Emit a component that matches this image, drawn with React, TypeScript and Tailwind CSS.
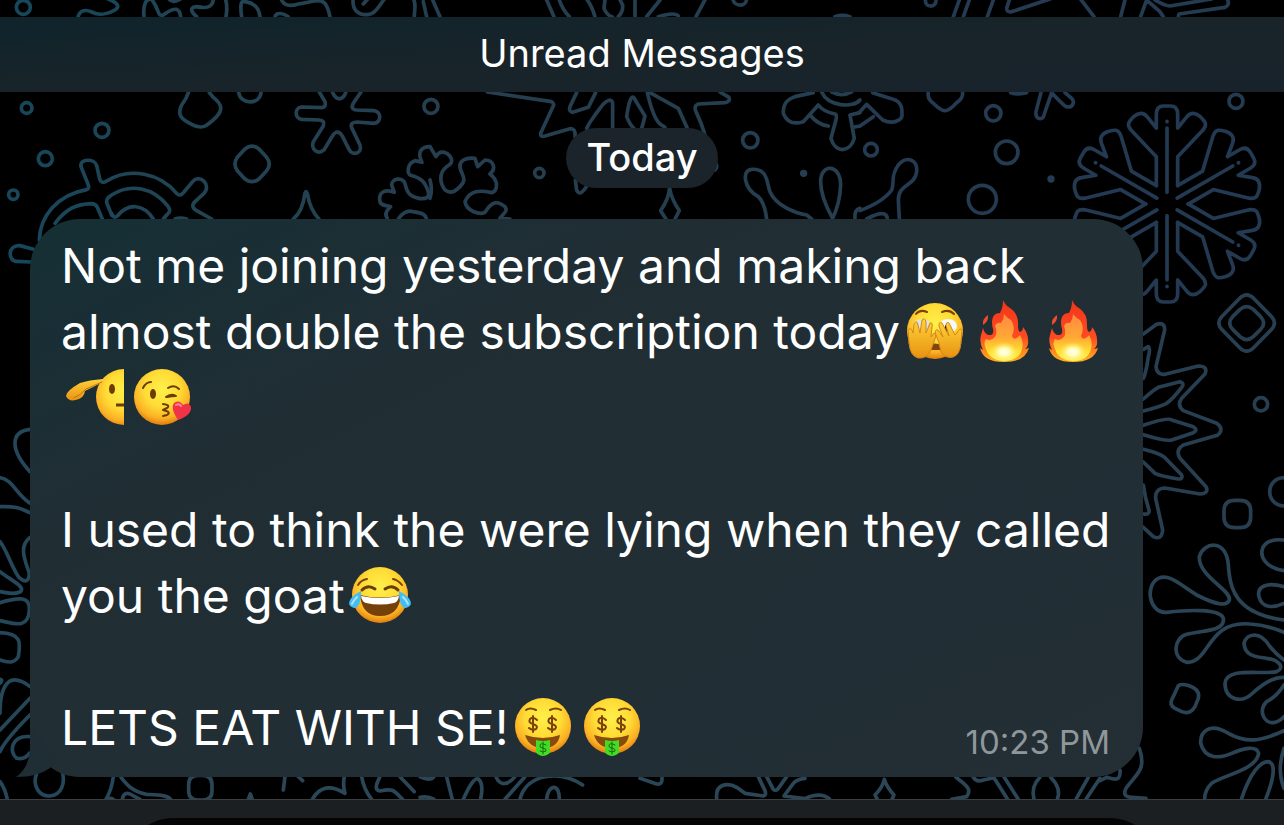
import type { ReactNode } from 'react'

const doodles = [
  {
    place: 'translate(0 0) scale(0.3333)',
    color: 'url(#teal)',
    paths: [
      'M234,50 C240,30 258,28 275,36 C300,48 320,44 345,30 C362,18 352,8 320,-5',
      'M432,50 C428,10 440,-5 455,-2 C480,30 470,50 490,45 C500,38 515,25 530,28 C540,32 542,50 542,50',
      'M505,-5 C515,8 525,5 540,-2',
      'M590,50 C572,35 568,22 590,20 C615,25 640,25 640,-5',
      'M676,-5 C684,20 680,35 678,50',
      'M725,50 C722,30 720,5 730,4 C770,8 778,30 780,50',
      'M825,50 C830,35 850,40 865,50',
      'M843,-5 C850,18 870,20 895,12 C940,5 960,-5 975,10 C985,25 988,40 990,50',
      'M1090,12 L1105,-5 M1060,-5 C1055,30 1075,45 1100,44 C1125,45 1135,20 1155,-5',
      'M1240,-5 C1250,15 1243,30 1243,50 M1270,5 L1280,50',
      'M566,276 Q560,295 545,315 C530,345 545,358 575,373 C605,390 620,380 650,350 C672,325 662,310 640,292 L628,278',
      'M716,278 C722,315 780,315 783,278',
      'M958,276 L975,305 Q980,322 965,323 L905,321 C883,323 883,355 905,358 L958,360 Q976,362 970,378 L940,425 C932,450 955,465 972,450 L995,412 Q1012,382 1028,410 L1047,448 C1058,470 1088,460 1080,435 L1055,383 Q1050,367 1070,366 L1122,370 C1145,368 1145,335 1122,332 L1070,330 Q1050,328 1060,310 L1083,276',
      'M997,276 L1003,287 Q1018,306 1033,287 L1038,276',
      'M735,447 Q756,430 777,447 L800,472 Q816,492 800,512 L777,537 Q756,553 735,537 L712,512 Q698,492 712,472Z',
      'M118,720 C120,650 170,585 260,569 Q270,567 263,550 L243,500 C238,475 285,475 290,497 L300,540 Q306,552 320,543 C390,500 480,520 530,580 Q540,592 552,576 L578,545 C600,520 635,555 612,580 L585,605 Q570,620 590,632 L635,657',
      'M165,670 C200,625 230,612 275,611 Q288,612 292,622 L307,657',
      'M335,645 L320,608 Q318,595 335,585 C390,550 460,560 505,620 Q515,635 500,645 L490,657',
      'M335,640 Q342,660 355,645 C385,610 430,610 460,657 M525,657 Q540,652 560,657',
      'M100,748 L60,737 C20,735 25,785 50,784 L92,786',
      'M880,657 Q908,635 915,580 Q918,570 922,580 Q930,630 957,657',
      'M1290,440 C1265,440 1250,455 1266,487 L1245,482 C1222,490 1220,520 1232,526 C1265,535 1275,545 1285,575 Q1292,598 1260,596 C1235,590 1222,585 1215,550 C1208,530 1175,535 1175,555 L1183,577 C1150,565 1135,580 1140,605 C1142,615 1155,617 1172,620 Q1150,640 1162,655',
      'M1195,657 Q1215,628 1240,635 C1265,640 1275,640 1280,657',
    ],
    rings: [[70, 22, 21], [80, 324, 16], [306, 391, 21], [136, 476, 21], [40, 584, 14], [1293, 319, 21]],
    dots: [],
  },
  {
    place: 'translate(430 0) scale(0.3333)',
    color: '#263f50',
    paths: [
      'M8,0 L30,50 M350,0 L372,50 M388,0 Q398,30 418,50 M468,-5 Q485,15 495,50',
      'M525,0 L522,25 Q530,45 548,52 M565,50 Q580,35 578,15 L570,0 M615,0 V50 M650,50 L690,0 M685,50 Q735,35 745,48 M825,0 L798,50',
      'M908,-5 C912,22 950,22 950,-5 M1215,50 Q1237,42 1260,50',
      'M172,276 L365,305 Q375,312 368,322 L332,400 Q330,412 345,408 L420,386 Q438,385 435,410',
      'M436,540 L440,570 Q448,588 462,570 L472,557',
      'M497,278 L475,322 L428,337 Q415,335 420,320 L440,278',
      'M470,385 Q480,365 495,345 C515,320 520,305 540,300 Q550,302 548,320 L548,385',
      'M612,385 Q600,375 590,350 Q600,280 612,294 Q618,305 645,348 Q640,370 635,385',
      'M652,278 Q670,355 690,372 L705,382 M660,278 L745,325 L772,385',
      'M870,276 L897,292 Q902,305 885,308 L805,312 Q790,318 798,335 Q815,370 825,405 M857,490 Q864,500 855,510',
      'M0,440 L18,470 Q30,450 50,460 C70,475 70,490 50,500 C25,520 30,550 45,570 C65,585 80,570 90,560 C110,540 100,530 92,510 C82,480 110,472 135,475 L143,500 L165,480 C190,480 200,505 180,522 C210,545 200,575 185,578 C150,570 120,570 105,605 C110,635 150,645 165,637 C185,605 200,600 225,620 C235,635 220,640 210,655 L240,657',
      'M0,540 Q8,570 0,595',
      'M708,657 L692,632 Q715,600 719,565 Q725,600 748,632 L735,657',
      'M1010,657 Q1005,610 985,590 C940,565 935,510 965,508 C1015,505 1010,550 1020,575 C1040,620 1100,640 1130,645 L1145,657',
      'M1208,655 Q1172,590 1172,545 C1172,490 1232,490 1232,555 Q1230,610 1208,655 M1275,657 Q1272,630 1290,625',
      'M1150,278 L1095,290 C1070,300 1060,310 1060,340 C1070,365 1090,375 1120,365 L1165,315 Q1180,335 1215,342 Q1222,345 1218,360 L1203,415 C1215,460 1260,460 1273,415 L1260,345 L1290,338',
      'M1175,276 C1195,320 1270,325 1290,300 M1205,276 Q1235,292 1265,276 M1140,345 Q1165,375 1195,378 M1270,382 L1290,378',
    ],
    rings: [[961, 421, 23], [328, 519, 14]],
    dots: [[1121, 520, 11]],
  },
  {
    place: 'translate(860 0) scale(0.3333)',
    color: '#243b51',
    paths: [
      'M197,-5 C190,25 230,25 228,0 M298,0 L280,50 M328,0 L310,50 M400,0 L382,50 M448,0 L440,25 Q440,38 455,35 L570,-3',
      'M660,-5 L702,50 M795,0 L782,50 M842,50 L860,0 L900,35 L910,50 M885,0 Q915,18 930,18 L1055,-3 M955,50 L957,42 L1095,22 Q1110,15 1103,0',
      'M0,335 L20,313 L68,360 C100,375 130,360 126,340 C128,300 100,298 80,292 L38,278 M0,378 L40,350',
      'M205,276 Q200,295 220,310 C250,340 260,340 290,308 Q310,295 308,276',
      'M452,278 Q465,285 500,278 M543,278 L528,335 C525,360 550,362 552,345 L575,278 Q605,310 618,320 C640,325 645,305 635,295 L615,278',
      'M0,632 Q70,605 95,570 C105,545 90,530 115,495 C140,465 175,480 170,515 C165,560 115,550 115,600 L118,657 M20,657 Q80,625 82,657',
    ],
    rings: [[400, 340, 23], [33, 449, 19], [440, 457, 34], [367, 598, 42], [1128, 304, 21]],
    dots: [[573, 537, 11]],
  },
  {
    place: 'translate(1100 290) scale(0.3333)',
    color: '#283f52',
    paths: [
      'M420,24 Q440,5 460,24 L515,80 Q532,99 515,118 L460,174 Q440,193 420,174 L365,118 Q348,99 365,80Z',
      'M420,58 Q440,42 460,58 L482,80 Q500,99 482,118 L460,140 Q440,158 420,140 L398,118 Q380,99 398,80Z',
      'M130,132 L170,103 Q195,95 194,120 L168,230 Q170,255 195,253 L295,228 Q325,228 315,252 L245,325 Q230,345 250,362 L350,400 Q375,418 352,436 L250,465 Q225,480 240,505 L318,590 Q328,610 300,612 L195,594 Q165,595 167,625 L188,720 Q185,752 160,740 L130,712',
      'M130,178 L145,170 Q152,180 145,200 Q138,250 130,265',
      'M130,327 Q160,300 175,292 L240,275 Q255,280 245,292 Q220,325 200,340 Q180,350 130,363',
      'M130,406 Q205,380 215,390 L280,410 Q295,420 280,428 L215,450 Q200,455 130,434',
      'M130,478 Q180,490 195,503 L245,555 Q250,568 235,567 Q180,558 165,550 L130,516',
      'M130,585 Q135,625 147,660 Q150,675 130,672',
      'M404,631 H420 Q452,631 452,663 V681 Q452,713 420,713 H404 Q372,713 372,681 V663 Q372,631 404,631Z',
      'M552,563 C495,565 495,645 552,648',
    ],
    rings: [[483, 343, 20]],
    dots: [],
  },
  {
    place: 'translate(1100 540) scale(0.3333)',
    color: '#2b4455',
    paths: [
      'M552,240 C400,220 390,140 385,75 C380,-5 310,5 298,50 C295,110 395,150 388,180 C380,200 350,195 290,165 C240,135 210,100 175,115 C135,135 145,220 200,217 C260,210 360,205 370,235 C375,275 310,270 260,283 C220,295 215,355 260,367 C330,370 320,240 450,252 Q500,255 552,277',
      'M552,92 C500,85 475,50 490,20 Q505,-5 552,0',
      'M552,140 C500,125 470,140 477,170 C485,205 520,205 552,190',
      'M552,360 Q530,345 510,320 C480,270 440,280 432,310 C435,350 470,350 500,355 C540,360 555,385 530,395 C480,405 380,380 375,430 C375,480 425,490 455,462 Q510,410 552,412',
      'M552,435 Q530,470 500,485 C475,510 490,550 520,548 Q540,545 552,530',
      'M235,437 Q250,428 280,443 Q300,455 295,475 L285,500 Q270,525 245,515 L225,505 Q208,495 215,480Z',
      'M552,572 C480,605 440,610 385,580 C330,545 300,575 302,610 C315,660 360,655 395,640 C430,625 470,615 476,640 C470,690 370,705 335,730 Q315,750 314,775',
      'M425,775 C450,700 480,665 505,665 C530,670 520,720 498,775 M552,625 Q530,690 552,745',
      'M118,625 C140,690 110,700 78,745 Q65,770 95,772 L138,775 M60,690 C62,720 50,722 20,712 L0,722',
    ],
    rings: [],
    dots: [],
  },
  {
    place: 'translate(0 400) scale(0.3333)',
    color: '#25475a',
    paths: [
      'M90,88 C30,95 30,150 90,215 M0,233 C40,240 45,280 90,310 M0,320 C50,318 60,325 90,338',
      'M90,412 C55,440 75,480 88,520 Q85,560 55,530 C30,490 20,450 0,425 M0,515 C40,545 75,560 62,575 Q45,585 0,575',
      'M0,608 C60,590 90,590 88,630 C85,690 40,670 0,662 M0,698 C70,700 60,735 55,770 C40,795 20,785 0,780',
      'M0,850 Q10,840 0,838 M0,940 C0,860 25,810 90,860 M0,990 L90,895 M0,1055 Q15,1020 90,945',
      'M90,1010 C35,1005 25,1055 50,1075 Q75,1080 88,1060 M110,1120 C95,1160 120,1190 150,1188 C185,1185 195,1150 188,1120',
      'M0,1145 Q15,1165 22,1198 M340,1130 Q335,1170 318,1198',
    ],
    rings: [],
    dots: [],
  },
  {
    place: 'translate(60 740) scale(0.3333)',
    color: '#2b4657',
    paths: [
      'M183,112 C205,140 220,155 260,163 C300,165 320,165 332,178 M187,178 Q190,155 210,162 L240,178 M140,180 Q152,170 162,180',
      'M414,106 H428 Q456,106 456,134 V152 Q456,180 428,180 H414 Q386,180 386,152 V134 Q386,106 414,106Z',
      'M565,178 L571,162 L577,178 M675,110 L670,150 M710,105 L728,122 M757,178 Q790,120 855,160 Q848,135 853,110',
      'M905,110 Q912,150 935,178 M960,110 C945,140 945,150 960,153 C1000,145 1000,150 1028,178 M1020,110 L1063,155',
      'M1080,110 Q1110,125 1122,110 M1080,172 Q1105,168 1122,178 M1160,110 L1177,178 M1210,178 Q1240,110 1255,117 Q1272,130 1262,178',
      'M1308,110 C1320,140 1345,135 1365,110 M1395,110 L1335,178 M1380,178 C1400,100 1500,90 1568,135 M1460,178 C1465,130 1500,130 1498,178',
    ],
    rings: [],
    dots: [],
  },
  {
    place: 'translate(640 700) scale(0.3333)',
    color: '#2b4657',
    paths: [
      'M0,235 L50,252 Q68,255 66,232 M230,296 C225,245 270,250 290,262 L315,280 L370,288 Q380,285 375,272 L355,230',
      'M380,230 L400,268 Q408,275 415,265 L440,230 M495,235 Q470,238 460,250 L432,288 L495,296 Q540,275 568,296',
      'M712,298 L705,285 Q728,262 733,238 Q740,262 762,285 L756,298',
      'M948,232 C985,260 995,270 980,290 L935,298 M1000,232 Q1010,248 1030,240 L1055,235 M1060,230 L1103,298 M1092,230 L1135,298',
      'M1200,232 Q1172,260 1182,298 M1232,232 Q1265,265 1252,298 M1345,232 L1308,298 M1380,235 L1338,298',
    ],
    rings: [],
    dots: [],
  },
]

function Wallpaper() {
  return (
    <svg
      className="absolute inset-0 h-full w-full"
      viewBox="0 0 1284 825"
      preserveAspectRatio="xMidYMid slice"
      fill="none"
      aria-hidden="true"
    >
      <defs>
        <linearGradient id="teal" gradientUnits="userSpaceOnUse" x1="0" y1="0" x2="1290" y2="0">
          <stop offset="0" stopColor="#15485b" />
          <stop offset="0.5" stopColor="#234353" />
          <stop offset="1" stopColor="#263f50" />
        </linearGradient>
        <radialGradient id="face" cx="0.5" cy="0.36" r="0.65">
          <stop offset="0" stopColor="#fff04a" />
          <stop offset="0.5" stopColor="#ffdb35" />
          <stop offset="0.8" stopColor="#fbb124" />
          <stop offset="1" stopColor="#de780c" />
        </radialGradient>
        <radialGradient id="halfFace" gradientUnits="userSpaceOnUse" cx="63" cy="26" r="37">
          <stop offset="0" stopColor="#fff04a" />
          <stop offset="0.5" stopColor="#ffdb35" />
          <stop offset="0.8" stopColor="#fbb124" />
          <stop offset="1" stopColor="#de780c" />
        </radialGradient>
        <linearGradient id="hand" x1="0" y1="0" x2="0" y2="1">
          <stop offset="0" stopColor="#ffd238" />
          <stop offset="1" stopColor="#e89212" />
        </linearGradient>
        <linearGradient id="flameOuter" x1="0" y1="0" x2="0" y2="1">
          <stop offset="0" stopColor="#f0361b" />
          <stop offset="0.6" stopColor="#ff4a21" />
          <stop offset="1" stopColor="#ffb51e" />
        </linearGradient>
        <linearGradient id="flameInner" x1="0" y1="0" x2="0" y2="1">
          <stop offset="0" stopColor="#ff8a42" />
          <stop offset="0.5" stopColor="#ffa835" />
          <stop offset="0.8" stopColor="#ffe032" />
          <stop offset="1" stopColor="#fff36a" />
        </linearGradient>
        <radialGradient id="glow">
          <stop offset="0" stopColor="#fffff0" />
          <stop offset="0.4" stopColor="#fffcb8" />
          <stop offset="1" stopColor="#ffee50" stopOpacity="0" />
        </radialGradient>
      </defs>
      {doodles.map((group) => (
        <g key={group.place} transform={group.place} stroke={group.color} strokeWidth="11" strokeLinecap="round" strokeLinejoin="round">
          {group.paths.map((d) => (
            <path key={d} d={d} />
          ))}
          {group.rings.map(([x, y, r]) => (
            <circle key={`${x}-${y}`} cx={x} cy={y} r={r} />
          ))}
          {group.dots.map(([x, y, r]) => (
            <circle key={`${x}-${y}`} cx={x} cy={y} r={r} fill={group.color} stroke="none" />
          ))}
        </g>
      ))}
      <g transform="translate(1167 204) scale(0.3333)" stroke="#233a52" strokeWidth="11" strokeLinecap="round" strokeLinejoin="round">
        {[0, 60, 120, 180, 240, 300].map((angle) => (
          <g key={angle} transform={`rotate(${angle})`}>
            <path d="M-32,-55 V-142 L-108,-222 C-122,-240 -115,-247 -100,-262 C-85,-275 -70,-275 -60,-262 L-32,-228 V-270 Q-32,-294 -10,-294 H10 Q32,-294 32,-270 V-228 L60,-262 C70,-275 85,-275 100,-262 C115,-247 122,-240 108,-222 L32,-142 V-55" />
            <path d="M0,-35 V-228 M0,-247 V-248" />
          </g>
        ))}
      </g>
    </svg>
  )
}

function Emoji({ label, children }: { label: string; children: ReactNode }) {
  return (
    <svg
      role="img"
      aria-label={label}
      viewBox="0 0 69 66"
      className="inline-block h-[66px] w-[69px] align-top"
      fill="none"
      strokeLinecap="round"
      strokeLinejoin="round"
    >
      {children}
    </svg>
  )
}

function Peeking() {
  return (
    <Emoji label="Face with peeking eye">
      <circle cx="35" cy="32" r="28" fill="url(#face)" />
      <path d="M16,15 Q20,10 27,13 M42,13 Q49,10 54,15" stroke="#7a4206" strokeWidth="2" />
      <ellipse cx="22" cy="27" rx="9" ry="7" fill="#dfe3e4" />
      <ellipse cx="48" cy="27" rx="9" ry="7" fill="#f7f8f8" />
      <rect x="45" y="26" width="5" height="7" rx="1" fill="#241607" />
      <path d="M29,46 Q35,43 41,46 L42,51 H28Z" fill="#81440a" />
      <path d="M9,44 L8,31 Q11,27 13,34 L14,25 Q17,20 18,26 L20,34 L22,21 Q25,18 26,23 L26,34 L30,24 Q33,23 32,28 L31,38 L34,34 Q37,34 35,40 L31,51 Q27,60 18,59 Q10,57 9,44Z" fill="url(#hand)" stroke="#d08718" strokeWidth="1" />
      <path d="M61,44 L62,31 Q60,28 57,34 L55,36 L49,24 Q46,22 46,27 L49,37 L42,24 Q39,22 39,27 L43,38 L38,31 Q34,30 36,36 L39,44 L41,53 Q46,60 53,58 Q60,56 61,44Z" fill="url(#hand)" stroke="#d08718" strokeWidth="1" />
    </Emoji>
  )
}

function Fire() {
  return (
    <Emoji label="Fire">
      <path d="M34,1 Q36,6 41,9 Q50,15 49,27 Q49,32 51,33 Q54,32 54,28 Q59,34 59,41 Q60,47 56,50 L60,49 Q56,63 35,63 Q14,63 11,49 L14,51 Q10,43 12,36 L14,29 Q16,37 22,36 Q25,35 24,30 Q22,23 24,18 Q26,14 31,14 Q34,9 34,1Z" fill="url(#flameOuter)" />
      <path d="M14,26 Q13,20 19,16 Q20,22 14,26Z" fill="#ef4b2b" />
      <path d="M35,15 Q38,19 42,21 Q47,28 43,37 Q45,43 51,36 Q55,43 53,50 Q50,62 35,62 Q20,61 17,50 Q14,44 17,40 Q23,43 27,36 Q28,31 26,27 Q28,23 32,24 Q35,20 35,15Z" fill="url(#flameInner)" />
      <ellipse cx="35" cy="53" rx="14" ry="10" fill="url(#glow)" />
    </Emoji>
  )
}

// only the left half of the face is drawn, the right edge is cut straight
function Salute() {
  return (
    <Emoji label="Saluting face">
      <path d="M63,4 A28,28 0 0 0 63,60Z" fill="url(#halfFace)" />
      <path d="M42,14 Q28,15 19,18 Q5,26 5,31 Q8,38 18,34 Q23,32 24,26 L42,17Z" fill="url(#hand)" />
      <path d="M41,17 L25,24 Q20,30 13,33" stroke="#c47515" strokeWidth="1" />
      <ellipse cx="51" cy="24" rx="3" ry="5" fill="#6c3c05" />
      <path d="M55,40 H63" stroke="#6c3c05" strokeWidth="3" strokeLinecap="butt" />
    </Emoji>
  )
}

function Kiss() {
  return (
    <Emoji label="Face blowing a kiss">
      <circle cx="32" cy="32" r="28" fill="url(#face)" />
      <path d="M13,23 Q16,17 21,17 M38,23 Q44,19 49,24" stroke="#6c3c05" strokeWidth="2" />
      <ellipse cx="23" cy="29" rx="3" ry="5" fill="#6c3c05" />
      <path d="M36,32 Q41,28 46,31 Q42,31 37,32" stroke="#6c3c05" strokeWidth="2" />
      <path d="M33,39 Q41,40 37,43 L33,45 Q42,47 37,50 L33,51" stroke="#6c3c05" strokeWidth="2" />
      <path d="M48,55 Q40,43 44,38 Q49,34 53,40 Q59,36 61,42 Q62,50 48,55Z" fill="#f03347" />
      <path d="M46,40 Q49,38 51,41" stroke="#ff8d99" strokeWidth="2" />
    </Emoji>
  )
}

function Joy() {
  return (
    <Emoji label="Face with tears of joy">
      <circle cx="35" cy="32" r="28" fill="url(#face)" />
      <path d="M13,22 Q16,17 22,16 M48,16 Q53,17 57,22" stroke="#7a4206" strokeWidth="2" />
      <path d="M17,27 Q23,21 30,26 M40,26 Q47,21 53,27" stroke="#6c3c05" strokeWidth="3" />
      <path d="M15,32 Q35,37 56,32 Q54,53 35,53 Q17,53 15,32Z" fill="#76400a" />
      <path d="M16,33 Q35,37 54,33 Q53,39 49,40 Q35,43 21,40 Q17,39 16,33Z" fill="#fff" />
      <path d="M16,28 Q16,45 9,45 Q2,43 5,37 Q8,32 16,28Z M54,28 Q54,45 61,45 Q68,43 65,37 Q62,32 54,28Z" fill="#46bdf2" />
      <path d="M12,34 Q8,38 7,41 M58,34 Q62,38 63,41" stroke="#a5e5ff" strokeWidth="2" />
    </Emoji>
  )
}

function Money() {
  return (
    <Emoji label="Money-mouth face">
      <circle cx="35" cy="31" r="28" fill="url(#face)" />
      <path d="M18,15 Q22,12 28,15 M42,15 Q48,12 53,15" stroke="#7a4206" strokeWidth="2" />
      <path d="M29,25 Q25,21 22,24 Q20,28 25,29 Q31,31 28,34 Q24,36 21,33 M25,21 V37 M48,25 Q44,21 41,24 Q39,28 44,29 Q50,31 47,34 Q43,36 40,33 M44,21 V37" stroke="#7a4206" strokeWidth="2" />
      <path d="M17,40 Q35,46 52,40 Q50,53 35,53 Q21,53 17,40Z" fill="#874b0d" />
      <path d="M28,45 Q35,47 42,45 V57 Q41,60 35,61 Q29,60 28,57Z" fill="#43dc25" />
      <path d="M38,50 Q32,47 32,51 Q32,53 35,53 Q39,54 38,56 Q35,58 32,56 M35,47 V59" stroke="#176b0c" strokeWidth="1" />
    </Emoji>
  )
}

export default function App() {
  return (
    <div className="relative flex h-screen flex-col overflow-hidden bg-black font-['Inter',sans-serif] text-white">
      <Wallpaper />

      <main className="relative flex flex-col pt-[17px]">
        <div className="flex h-[75px] items-center justify-center bg-linear-to-br from-[#0f242b] via-[#18242a] to-[#18222b] pb-1">
          <h1 className="text-[38px] leading-none">Unread Messages</h1>
        </div>

        <div className="mt-9 flex h-[60px] items-center self-center rounded-full bg-[#1a242a] px-5 pb-0.5">
          <h2 className="text-[38px] leading-none font-medium">Today</h2>
        </div>

        <article className="relative mt-[31px] mr-[141px] ml-[30px] rounded-[50px] bg-linear-to-br from-[#142f35] via-[#202e34] via-30% to-[#232e35] px-[31px] pt-[14px] pb-4">
          <svg className="absolute bottom-0 left-[-14px] h-[50px] w-[64px]" viewBox="0 0 64 50" aria-hidden="true">
            <path d="M14,0 V22 Q13,41 0,50 Q22,50 34,41 L40,30 Z" fill="#1f2e34" />
          </svg>
          <div className="relative text-[48px] leading-[66px]">
            <p>
              Not me joining yesterday and making back almost double the subscription today
              <Peeking />
              <Fire />
              <Fire />
              <Salute />
              <Kiss />
            </p>
            <p className="mt-[66px]">
              I used to think the were lying when they called you the goat
              <Joy />
            </p>
            <div className="mt-[66px] flex items-end justify-between">
              <p>
                LETS EAT WITH SE!
                <Money />
                <Money />
              </p>
              <time className="pr-0.5 text-[33px] leading-[38px] text-[#8f979b]">10:23 PM</time>
            </div>
          </div>
        </article>
      </main>

      <footer className="relative mt-[22px] flex-none border-t border-[#3c3f41] bg-[#1b1f21] pt-[18px] pr-[126px] pl-[125px]">
        <input type="text" aria-label="Message" className="block h-24 w-full rounded-[48px] bg-[#050505] px-8 text-[38px] outline-none" />
      </footer>
    </div>
  )
}
